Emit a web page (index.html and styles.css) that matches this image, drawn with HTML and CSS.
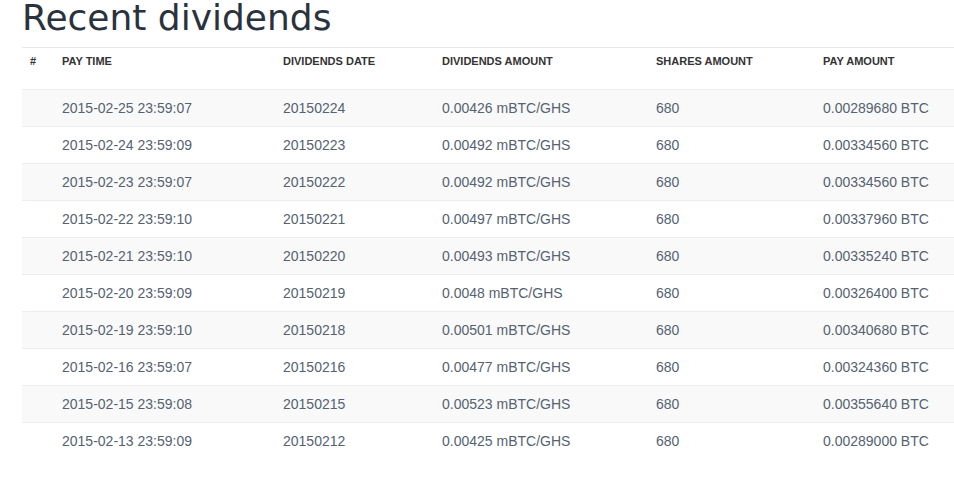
FILE: index.html
```html
<!DOCTYPE html>
<html>
<head>
<meta charset="utf-8">
<link rel="stylesheet" href="styles.css">
</head>
<body>
<div class="page">
  <h1 class="title">Recent dividends</h1>
  <table class="divs">
    <colgroup>
      <col class="c1"><col class="c2"><col class="c3"><col class="c4"><col class="c5"><col class="c6">
    </colgroup>
    <thead>
      <tr><th>#</th><th>PAY TIME</th><th>DIVIDENDS DATE</th><th>DIVIDENDS AMOUNT</th><th>SHARES AMOUNT</th><th>PAY AMOUNT</th></tr>
    </thead>
    <tbody>
      <tr><td></td><td>2015-02-25 23:59:07</td><td>20150224</td><td>0.00426 mBTC/GHS</td><td>680</td><td>0.00289680 BTC</td></tr>
      <tr><td></td><td>2015-02-24 23:59:09</td><td>20150223</td><td>0.00492 mBTC/GHS</td><td>680</td><td>0.00334560 BTC</td></tr>
      <tr><td></td><td>2015-02-23 23:59:07</td><td>20150222</td><td>0.00492 mBTC/GHS</td><td>680</td><td>0.00334560 BTC</td></tr>
      <tr><td></td><td>2015-02-22 23:59:10</td><td>20150221</td><td>0.00497 mBTC/GHS</td><td>680</td><td>0.00337960 BTC</td></tr>
      <tr><td></td><td>2015-02-21 23:59:10</td><td>20150220</td><td>0.00493 mBTC/GHS</td><td>680</td><td>0.00335240 BTC</td></tr>
      <tr><td></td><td>2015-02-20 23:59:09</td><td>20150219</td><td>0.0048 mBTC/GHS</td><td>680</td><td>0.00326400 BTC</td></tr>
      <tr><td></td><td>2015-02-19 23:59:10</td><td>20150218</td><td>0.00501 mBTC/GHS</td><td>680</td><td>0.00340680 BTC</td></tr>
      <tr><td></td><td>2015-02-16 23:59:07</td><td>20150216</td><td>0.00477 mBTC/GHS</td><td>680</td><td>0.00324360 BTC</td></tr>
      <tr><td></td><td>2015-02-15 23:59:08</td><td>20150215</td><td>0.00523 mBTC/GHS</td><td>680</td><td>0.00355640 BTC</td></tr>
      <tr><td></td><td>2015-02-13 23:59:09</td><td>20150212</td><td>0.00425 mBTC/GHS</td><td>680</td><td>0.00289000 BTC</td></tr>
    </tbody>
  </table>
</div>
</body>
</html>
```

FILE: styles.css
```css
html, body {
  margin: 0;
  padding: 0;
  background: #ffffff;
  overflow: hidden;
}
.page {
  padding-left: 22px;
  font-family: "Liberation Sans", Arial, sans-serif;
}
.title {
  margin: 0;
  font-family: "DejaVu Sans", sans-serif;
  font-weight: normal;
  font-size: 36px;
  line-height: 36px;
  color: #2a323d;
  height: 47px;
}
.divs {
  width: 932px;
  border-collapse: collapse;
  table-layout: fixed;
  border-top: 1px solid #e4e7ea;
}
.c1 { width: 32px; }
.c2 { width: 221px; }
.c3 { width: 159px; }
.c4 { width: 214px; }
.c5 { width: 167px; }
.c6 { width: 139px; }
.divs th {
  text-align: left;
  font-size: 11px;
  font-weight: bold;
  color: #333333;
  padding: 7px 8px 22px 8px;
  line-height: 12px;
  vertical-align: top;
  white-space: nowrap;
}
.divs td {
  font-size: 14px;
  color: #556270;
  padding: 0 8px;
  height: 36px;
  line-height: 20px;
  border-top: 1px solid #e8edf0;
  vertical-align: middle;
  white-space: nowrap;
}
.divs tbody tr:nth-child(odd) td {
  background: #f9f9f9;
}
```
